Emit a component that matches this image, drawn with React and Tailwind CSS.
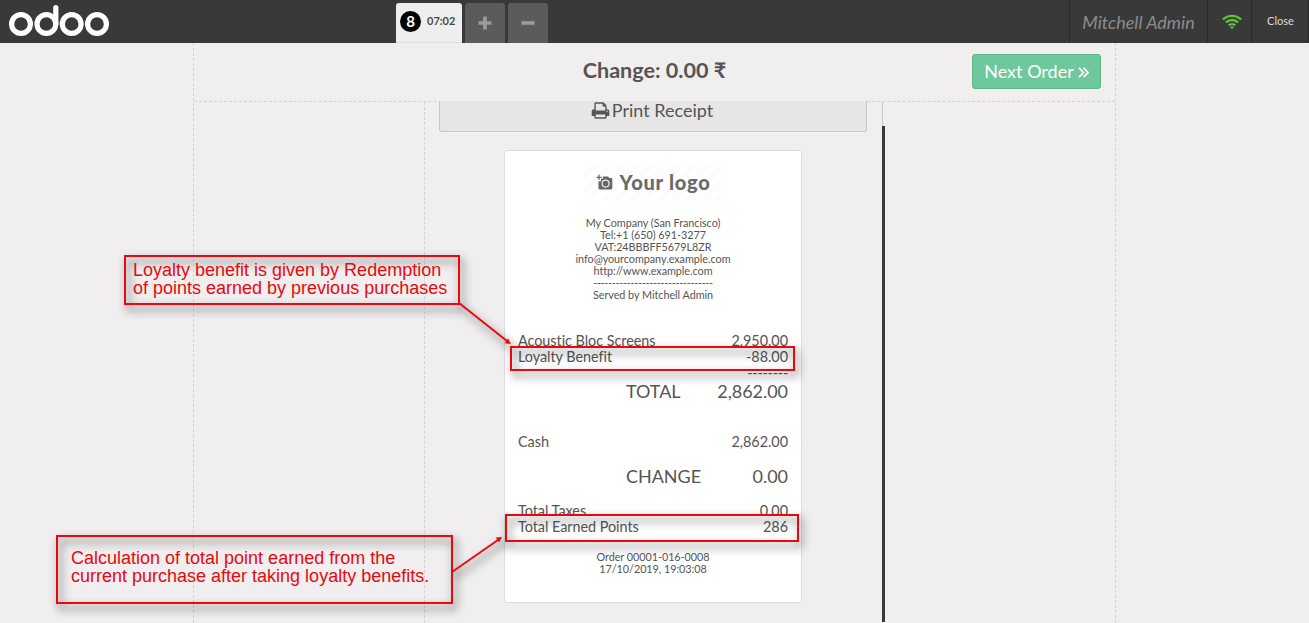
import React from 'react';

function OdooLogo() {
  return (
    <svg className="ml-2 mt-1 h-[34px] w-[104px]" viewBox="8 4 104 34" fill="none" stroke="#fff" strokeWidth="5.2" strokeLinecap="round">
      <circle cx="21" cy="24" r="9.4" />
      <circle cx="46.4" cy="24" r="9.4" />
      <path d="M55.800 24V7.600" />
      <circle cx="71.7" cy="24" r="9.4" />
      <circle cx="97" cy="24" r="9.4" />
    </svg>
  );
}

function WifiIcon() {
  return (
    <svg className="h-[16px] w-[20px]" viewBox="0 0 20 16" fill="none" stroke="#5ec436" strokeWidth="2.3">
      <path d="M.9 5.500a13 13 0 0 1 18.2 0" />
      <path d="M3.9 8.500a8.700 8.700 0 0 1 12.2 0" />
      <path d="M6.800 11.400a4.600 4.600 0 0 1 6.400 0" />
      <path d="M10 12.1L12 13.2L10 15.300L8 13.2Z" fill="#5ec436" stroke="none" />
    </svg>
  );
}

function PrintIcon() {
  return (
    <svg className="h-[19px] w-[19px]" viewBox="0 0 1792 1792" fill="#555">
      <path d="M448 1536h896v-256h-896v256zm0-640h896v-384h-160q-40 0-68-28t-28-68v-160h-640v640zm1152 64q0-26-19-45t-45-19-45 19-19 45 19 45 45 19 45-19 19-45zm128 0v416q0 13-9.5 22.5t-22.5 9.5h-224v160q0 40-28 68t-68 28h-960q-40 0-68-28t-28-68v-160h-224q-13 0-22.5-9.5t-9.5-22.5v-416q0-79 56.5-135.5t135.5-56.5h64v-544q0-40 28-68t68-28h672q40 0 88 20t76 48l152 152q28 28 48 76t20 88v256h64q79 0 135.5 56.5t56.5 135.5z" />
    </svg>
  );
}

function CameraIcon() {
  return (
    <svg className="h-[17px] w-[17px]" viewBox="0 0 17 17">
      <path d="M6.800 2.400h5.200l1.300 1.600H15q1.300 0 1.300 1.300v8.800q0 1.300-1.300 1.300H3.800q-1.300 0-1.300-1.300V7.200H5V4.800h1.800z" fill="#666" />
      <circle cx="9.600" cy="9.600" r="3.500" fill="none" stroke="#eee" strokeWidth="1.2" />
      <path d="M3 .8v5M.5 3.300h5" stroke="#666" strokeWidth="1.300" />
    </svg>
  );
}

function TopBar() {
  return (
    <header className="flex h-[43px] shrink-0 bg-[#393939]">
      <div className="w-[396px]"><OdooLogo /></div>
      <div className="flex flex-1 gap-[3px] pt-[3px]">
        <div className="flex w-[66px] items-center rounded-t-[3px] border-b border-[#ddd] bg-[#efeeee] pb-[2px] pl-1">
          <span className="flex size-[21px] items-center justify-center rounded-full bg-black text-[15px] font-bold text-white">8</span>
          <span className="ml-[6px] text-[11px] font-bold text-[#484848]">07:02</span>
        </div>
        <div className="flex w-10 items-center justify-center rounded-t-[3px] bg-[#5b5b5b]">
          <svg className="size-[14px]" viewBox="0 0 14 14"><path d="M7 .5v13M.5 7h13" stroke="#9c9c9c" strokeWidth="3.6" /></svg>
        </div>
        <div className="flex w-10 items-center justify-center rounded-t-[3px] bg-[#5b5b5b]">
          <svg className="size-[14px]" viewBox="0 0 14 14"><path d="M.5 7h13" stroke="#9c9c9c" strokeWidth="3.6" /></svg>
        </div>
      </div>
      <div className="flex w-[138px] items-center justify-center border-l border-[#292929] pt-[2px] text-[18px] italic text-[#8c8c8c]">Mitchell Admin</div>
      <div className="flex w-[44px] items-center justify-center border-l border-[#292929] pl-1"><WifiIcon /></div>
      <div className="flex w-[58px] items-center justify-center border-x border-[#292929] pl-px text-[11px] text-[#ddd]">Close</div>
    </header>
  );
}

function Line({ label, value, className = '' }) {
  return (
    <div className={`flex justify-between whitespace-nowrap ${className}`}>
      <span>{label}</span>
      <span>{value}</span>
    </div>
  );
}

function Receipt() {
  return (
    <section className="mt-[18px] ml-[79px] flex h-[453px] w-[298px] flex-col rounded-[3px] border border-[#dcdcdc] bg-white px-[13px] text-[14.4px] leading-[16px] tracking-[-0.03px] text-[#555]">
      <div className="mx-auto mt-[14px] flex h-[35px] w-[136px] items-center justify-center gap-[7px] bg-[repeating-linear-gradient(135deg,#fff_0px,#fff_5px,#fcfcfc_5px,#fcfcfc_10px)] pb-px">
        <CameraIcon />
        <span className="text-[20px] leading-none font-black tracking-[0.75px] whitespace-nowrap text-[#6a6a6a]">Your logo</span>
      </div>
      <div className="mt-[17px] text-center text-[10.8px] leading-[12px]">
        <div>My Company (San Francisco)</div>
        <div>Tel:+1 (650) 691-3277</div>
        <div>VAT:24BBBFF5679L8ZR</div>
        <div>info@yourcompany.example.com</div>
        <div>http://www.example.com</div>
        <div className="tracking-[-0.27px]">--------------------------------</div>
        <div>Served by Mitchell Admin</div>
      </div>
      <Line className="mt-[32px]" label="Acoustic Bloc Screens" value="2,950.00" />
      <Line label="Loyalty Benefit" value="-88.00" />
      <Line className="tracking-[-0.25px]" label="" value="--------" />
      <Line className="-mt-px pl-[108px] text-[18px] leading-[22px]" label="TOTAL" value="2,862.00" />
      <Line className="mt-[32px]" label="Cash" value="2,862.00" />
      <Line className="mt-[15px] pl-[108px] text-[18px] leading-[22px]" label="CHANGE" value="0.00" />
      <Line className="mt-[16px]" label="Total Taxes" value="0.00" />
      <Line label="Total Earned Points" value="286" />
      <div className="mt-[16px] text-center text-[10.8px] leading-[12px]">
        <div>Order 00001-016-0008</div>
        <div>17/10/2019, 19:03:08</div>
      </div>
    </section>
  );
}

function Annotations() {
  return (
    <div className="pointer-events-none absolute inset-0 font-['Liberation_Sans',sans-serif] text-[18px] leading-[18px] text-[#e60a0e]">
      <svg className="absolute inset-0 h-[623px] w-[1309px] drop-shadow-[3px_5px_5px_rgba(0,0,0,0.75)]" viewBox="0 0 1309 623" fill="none" stroke="#e60a0e" strokeWidth="2">
        <rect x="125" y="256" width="334" height="48" />
        <rect x="511" y="347" width="283" height="23" />
        <rect x="57" y="536" width="395" height="67" />
        <rect x="506" y="515" width="292" height="26" />
        <path d="M459 303L507 341" />
        <path d="M452 572L498 540" />
        <path d="M511 344L504.5 343.2L508 338.6Z" fill="#e60a0e" stroke="none" />
        <path d="M502 537L499.2 542.6L495.6 537.6Z" fill="#e60a0e" stroke="none" />
      </svg>
      <p className="absolute top-[261px] left-[133px] whitespace-nowrap">Loyalty benefit is given by Redemption<br />of points earned by previous purchases</p>
      <p className="absolute top-[549px] left-[71px] whitespace-nowrap">Calculation of total point earned from the<br />current purchase after taking loyalty benefits.</p>
    </div>
  );
}

export default function App() {
  return (
    <div className="relative flex h-[623px] w-[1309px] flex-col overflow-hidden bg-[#f0eeee] font-[Lato,sans-serif]">
      <TopBar />
      <main className="ml-[193px] flex h-[580px] w-[923px] flex-col border-x border-dashed border-[#d3d3d3]">
        <div className="flex h-[59px] shrink-0 border-b border-dashed border-[#d3d3d3]">
          <div className="w-[230px]" />
          <h1 className="w-[461px] pt-[13px] text-center text-[21.6px] leading-[28px] font-bold text-[#555]">Change: 0.00 ₹</h1>
          <div className="flex w-[230px] justify-end pt-[11px] pr-[14px]">
            <button className="flex h-[35px] w-[129px] items-center justify-center gap-[4px] rounded-[3px] border border-[#5fb588] bg-[#6ec89b] text-[18px] text-white">
              Next Order
              <svg className="mt-[2px] size-[11px]" viewBox="0 0 11 11" fill="none" stroke="#fff" strokeWidth="1.7"><path d="M1 .8l4.4 4.7L1 10.200M5.600.8L10 5.500 5.600 10.200" /></svg>
            </button>
          </div>
        </div>
        <div className="ml-[230px] flex flex-1">
          <div className="w-[458px] border-l border-dashed border-[#d3d3d3] pl-[14px]">
            <div className="-mt-px flex h-[31px] w-[428px] items-start justify-center gap-[2px] rounded-b-[3px] border border-t-0 border-[#c9c9c9] bg-[#e6e6e6] pr-[2px] text-[18px] leading-[20px] text-[#555]">
              <PrintIcon /><span className="-mt-px">Print Receipt</span>
            </div>
            <div className="-ml-[14px]"><Receipt /></div>
          </div>
          <div className="flex w-[3px] flex-col">
            <div className="h-[24px] border-l border-[#c8c8c8]" />
            <div className="h-[496px] bg-[#393939]" />
          </div>
        </div>
      </main>
      <Annotations />
    </div>
  );
}
